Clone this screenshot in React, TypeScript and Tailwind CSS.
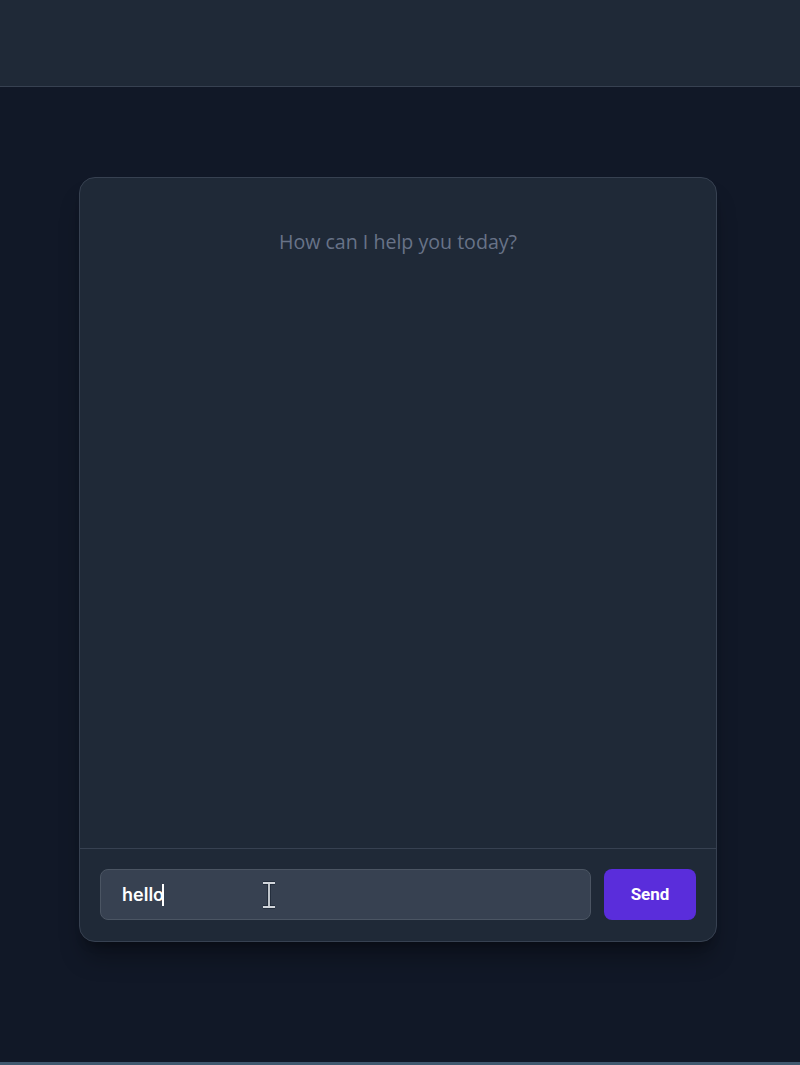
import React, { useState } from 'react';

const ChatWindow: React.FC = () => {
  const [draft, setDraft] = useState('hello');

  return (
    <div className="w-[638px] h-[765px] flex flex-col rounded-2xl border border-[#374151] bg-[#1f2937] shadow-xl shadow-black/30 overflow-hidden">
      {/* Messages */}
      <div className="flex-1 pt-[50px] text-center">
        <p className="text-[19.6px] leading-7 text-[#687388] font-['Open_Sans',sans-serif]">
          How can I help you today?
        </p>
      </div>

      {/* Composer */}
      <div className="relative flex items-center gap-[13px] border-t border-[#374151] px-5 pt-5 pb-[21px]">
        <input
          value={draft}
          onChange={(e) => setDraft(e.target.value)}
          className="h-[51px] flex-1 rounded-lg border border-[#4b5563] bg-[#374151] px-[21px] text-[18px] font-semibold text-white outline-none font-['Inter',sans-serif]"
        />
        <button className="h-[51px] w-[92px] rounded-lg bg-[#5a2ddb] text-[17px] font-bold text-white font-['Roboto',sans-serif]">
          Send
        </button>
        {/* text caret */}
        <span className="absolute left-[82px] top-[35px] h-[22px] w-[2px] bg-white" />
        {/* mouse I-beam */}
        <svg className="absolute left-[181px] top-[32px]" width="16" height="28" viewBox="0 0 16 28" fill="none">
          <path d="M2 2h12M2 26h12M8 2v24" stroke="#1f2937" strokeWidth="3.5" />
          <path d="M2 2h12M2 26h12M8 2v24" stroke="#d1d5db" strokeWidth="1.8" />
        </svg>
      </div>
    </div>
  );
};

export default function App() {
  return (
    <div className="min-h-[1065px] flex flex-col bg-[#111827]">
      <header className="h-[87px] shrink-0 border-b border-[#374151] bg-[#1f2937]" />
      <main className="flex-1 pt-[90px] pl-[79px]">
        <ChatWindow />
      </main>
      <div className="h-[3px] bg-[#41596f]" />
    </div>
  );
}
